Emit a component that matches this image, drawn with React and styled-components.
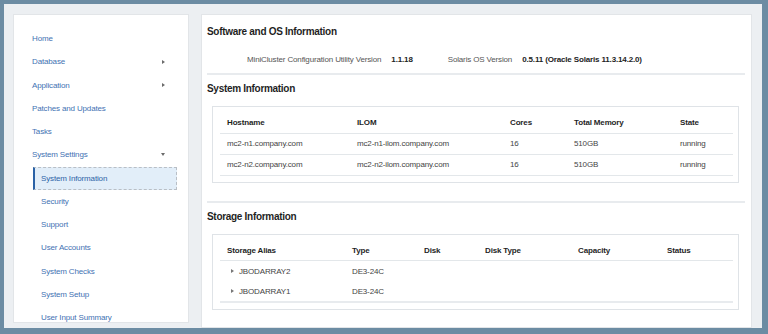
import styled, { createGlobalStyle } from "styled-components";

const Global = createGlobalStyle`
  html, body {
    margin: 0;
    padding: 0;
    background: #6c8ca3;
    font-family: "Liberation Sans", Arial, sans-serif;
  }
`;

const Frame = styled.div`
  margin: 4px 6px 0 4px;
  height: 324px;
  box-sizing: border-box;
  background: #eceff2;
  padding: 10px 10px 0 9px;
  display: flex;
  gap: 12px;
  overflow: hidden;
`;

const Sidebar = styled.nav`
  width: 176px;
  flex: none;
  height: 309px;
  box-sizing: border-box;
  background: #fff;
  border: 1px solid #e2e5e8;
  padding: 12px 0 0 0;
  display: flex;
  flex-direction: column;
  overflow: hidden;
`;

const NavItem = styled.div`
  flex: none;
  display: flex;
  align-items: center;
  justify-content: space-between;
  box-sizing: border-box;
  height: 23.25px;
  margin: 0 ${(p) => (p.$sub ? "11px" : "0")} 0 ${(p) => (p.$sub ? "19px" : "0")};
  padding: 0 22px 0 ${(p) => (p.$sub ? "6px" : "16px")};
  font-size: 8px;
  letter-spacing: -0.15px;
  color: #3f72b3;
  border: 1px dashed transparent;
  border-left: 2px solid transparent;
  ${(p) =>
    p.$active &&
    `
    background: #e2eef9;
    border-color: #b9bfc6;
    border-left: 2px solid #2b62a6;
    color: #2f64a8;
  `}
`;

const Arrow = styled.span`
  width: 0;
  height: 0;
  border-style: solid;
  ${(p) =>
    p.$down
      ? "border-width: 3px 2.5px 0 2.5px; border-color: #6b6b6b transparent transparent transparent;"
      : "border-width: 2.5px 0 2.5px 3px; border-color: transparent transparent transparent #6b6b6b;"}
`;

const Main = styled.main`
  width: 551px;
  flex: none;
  background: #fff;
  border: 1px solid #e2e5e8;
  box-sizing: border-box;
  padding: 10px 6px 0 5px;
`;

const Heading = styled.h2`
  margin: 0;
  height: 14px;
  line-height: 14px;
  font-size: 10px;
  letter-spacing: -0.3px;
  font-weight: bold;
  color: #1f1f1f;
`;

const InfoRow = styled.div`
  display: flex;
  align-items: center;
  height: 12px;
  margin-top: 14px;
  padding-left: 40px;
  font-size: 8px;
  letter-spacing: -0.15px;
`;

const InfoLabel = styled.span`
  color: #555;
  margin-right: 10px;
`;

const InfoValue = styled.span`
  color: #222;
  font-weight: bold;
  margin-right: ${(p) => p.$gap || 0}px;
`;

const Divider = styled.hr`
  border: none;
  height: 2px;
  background: #e8ebee;
  margin: ${(p) => p.$top}px 0 7px 0;
`;

const Card = styled.div`
  margin: 10px 6px 0 5px;
  border: 1px solid #dfe3e7;
  padding: 6px 6px 6px 7px;
`;

const Table = styled.table`
  width: 513px;
  border-collapse: collapse;
  table-layout: fixed;
  font-size: 8px;
  letter-spacing: -0.15px;
  border-bottom: ${(p) => (p.$foot ? "2px solid #e8ebee" : "none")};
`;

const Th = styled.th`
  box-sizing: border-box;
  width: ${(p) => p.$w}px;
  height: 20px;
  padding: 0 0 0 7px;
  text-align: left;
  font-weight: bold;
  color: #1f1f1f;
  border-bottom: 1px solid #e3e7ea;
`;

const Td = styled.td`
  height: 20px;
  padding: 0 0 0 7px;
  color: #444;
  white-space: nowrap;
  border-bottom: ${(p) => (p.$line ? "1px solid #e3e7ea" : "none")};
`;

const Expand = styled.span`
  display: inline-block;
  width: 0;
  height: 0;
  margin: 0 5px 0 4px;
  border-style: solid;
  border-width: 2.5px 0 2.5px 3px;
  border-color: transparent transparent transparent #777;
  vertical-align: 1px;
`;

const nav = [
  { label: "Home" },
  { label: "Database", arrow: "right" },
  { label: "Application", arrow: "right" },
  { label: "Patches and Updates" },
  { label: "Tasks" },
  { label: "System Settings", arrow: "down" },
  { label: "System Information", sub: true, active: true },
  { label: "Security", sub: true },
  { label: "Support", sub: true },
  { label: "User Accounts", sub: true },
  { label: "System Checks", sub: true },
  { label: "System Setup", sub: true },
  { label: "User Input Summary", sub: true },
];

const sysCols = [
  ["Hostname", 130],
  ["ILOM", 153],
  ["Cores", 64],
  ["Total Memory", 106],
  ["State", 60],
];

const sysRows = [
  ["mc2-n1.company.com", "mc2-n1-ilom.company.com", "16", "510GB", "running"],
  ["mc2-n2.company.com", "mc2-n2-ilom.company.com", "16", "510GB", "running"],
];

const storCols = [
  ["Storage Alias", 125],
  ["Type", 72],
  ["Disk", 61],
  ["Disk Type", 93],
  ["Capacity", 89],
  ["Status", 73],
];

const storRows = [
  ["JBODARRAY2", "DE3-24C"],
  ["JBODARRAY1", "DE3-24C"],
];

const App = () => {
  return (
    <>
      <Global />
      <Frame>
        <Sidebar>
          {nav.map((n) => (
            <NavItem key={n.label} $sub={n.sub} $active={n.active}>
              <span>{n.label}</span>
              {n.arrow && <Arrow $down={n.arrow === "down"} />}
            </NavItem>
          ))}
        </Sidebar>
        <Main>
          <Heading>Software and OS Information</Heading>
          <InfoRow>
            <InfoLabel>MiniCluster Configuration Utility Version</InfoLabel>
            <InfoValue $gap={35}>1.1.18</InfoValue>
            <InfoLabel>Solaris OS Version</InfoLabel>
            <InfoValue>0.5.11 (Oracle Solaris 11.3.14.2.0)</InfoValue>
          </InfoRow>
          <Divider $top={8} />
          <Heading>System Information</Heading>
          <Card>
            <Table>
              <thead>
                <tr>
                  {sysCols.map(([h, w]) => (
                    <Th key={h} $w={w}>
                      {h}
                    </Th>
                  ))}
                </tr>
              </thead>
              <tbody>
                {sysRows.map((r) => (
                  <tr key={r[0]}>
                    {r.map((c, i) => (
                      <Td key={i} $line>
                        {c}
                      </Td>
                    ))}
                  </tr>
                ))}
              </tbody>
            </Table>
          </Card>
          <Divider $top={18} />
          <Heading>Storage Information</Heading>
          <Card>
            <Table $foot>
              <thead>
                <tr>
                  {storCols.map(([h, w]) => (
                    <Th key={h} $w={w}>
                      {h}
                    </Th>
                  ))}
                </tr>
              </thead>
              <tbody>
                {storRows.map((r) => (
                  <tr key={r[0]}>
                    <Td>
                      <Expand />
                      {r[0]}
                    </Td>
                    <Td>{r[1]}</Td>
                    <Td />
                    <Td />
                    <Td />
                    <Td />
                  </tr>
                ))}
              </tbody>
            </Table>
          </Card>
        </Main>
      </Frame>
    </>
  );
};

export default App;
